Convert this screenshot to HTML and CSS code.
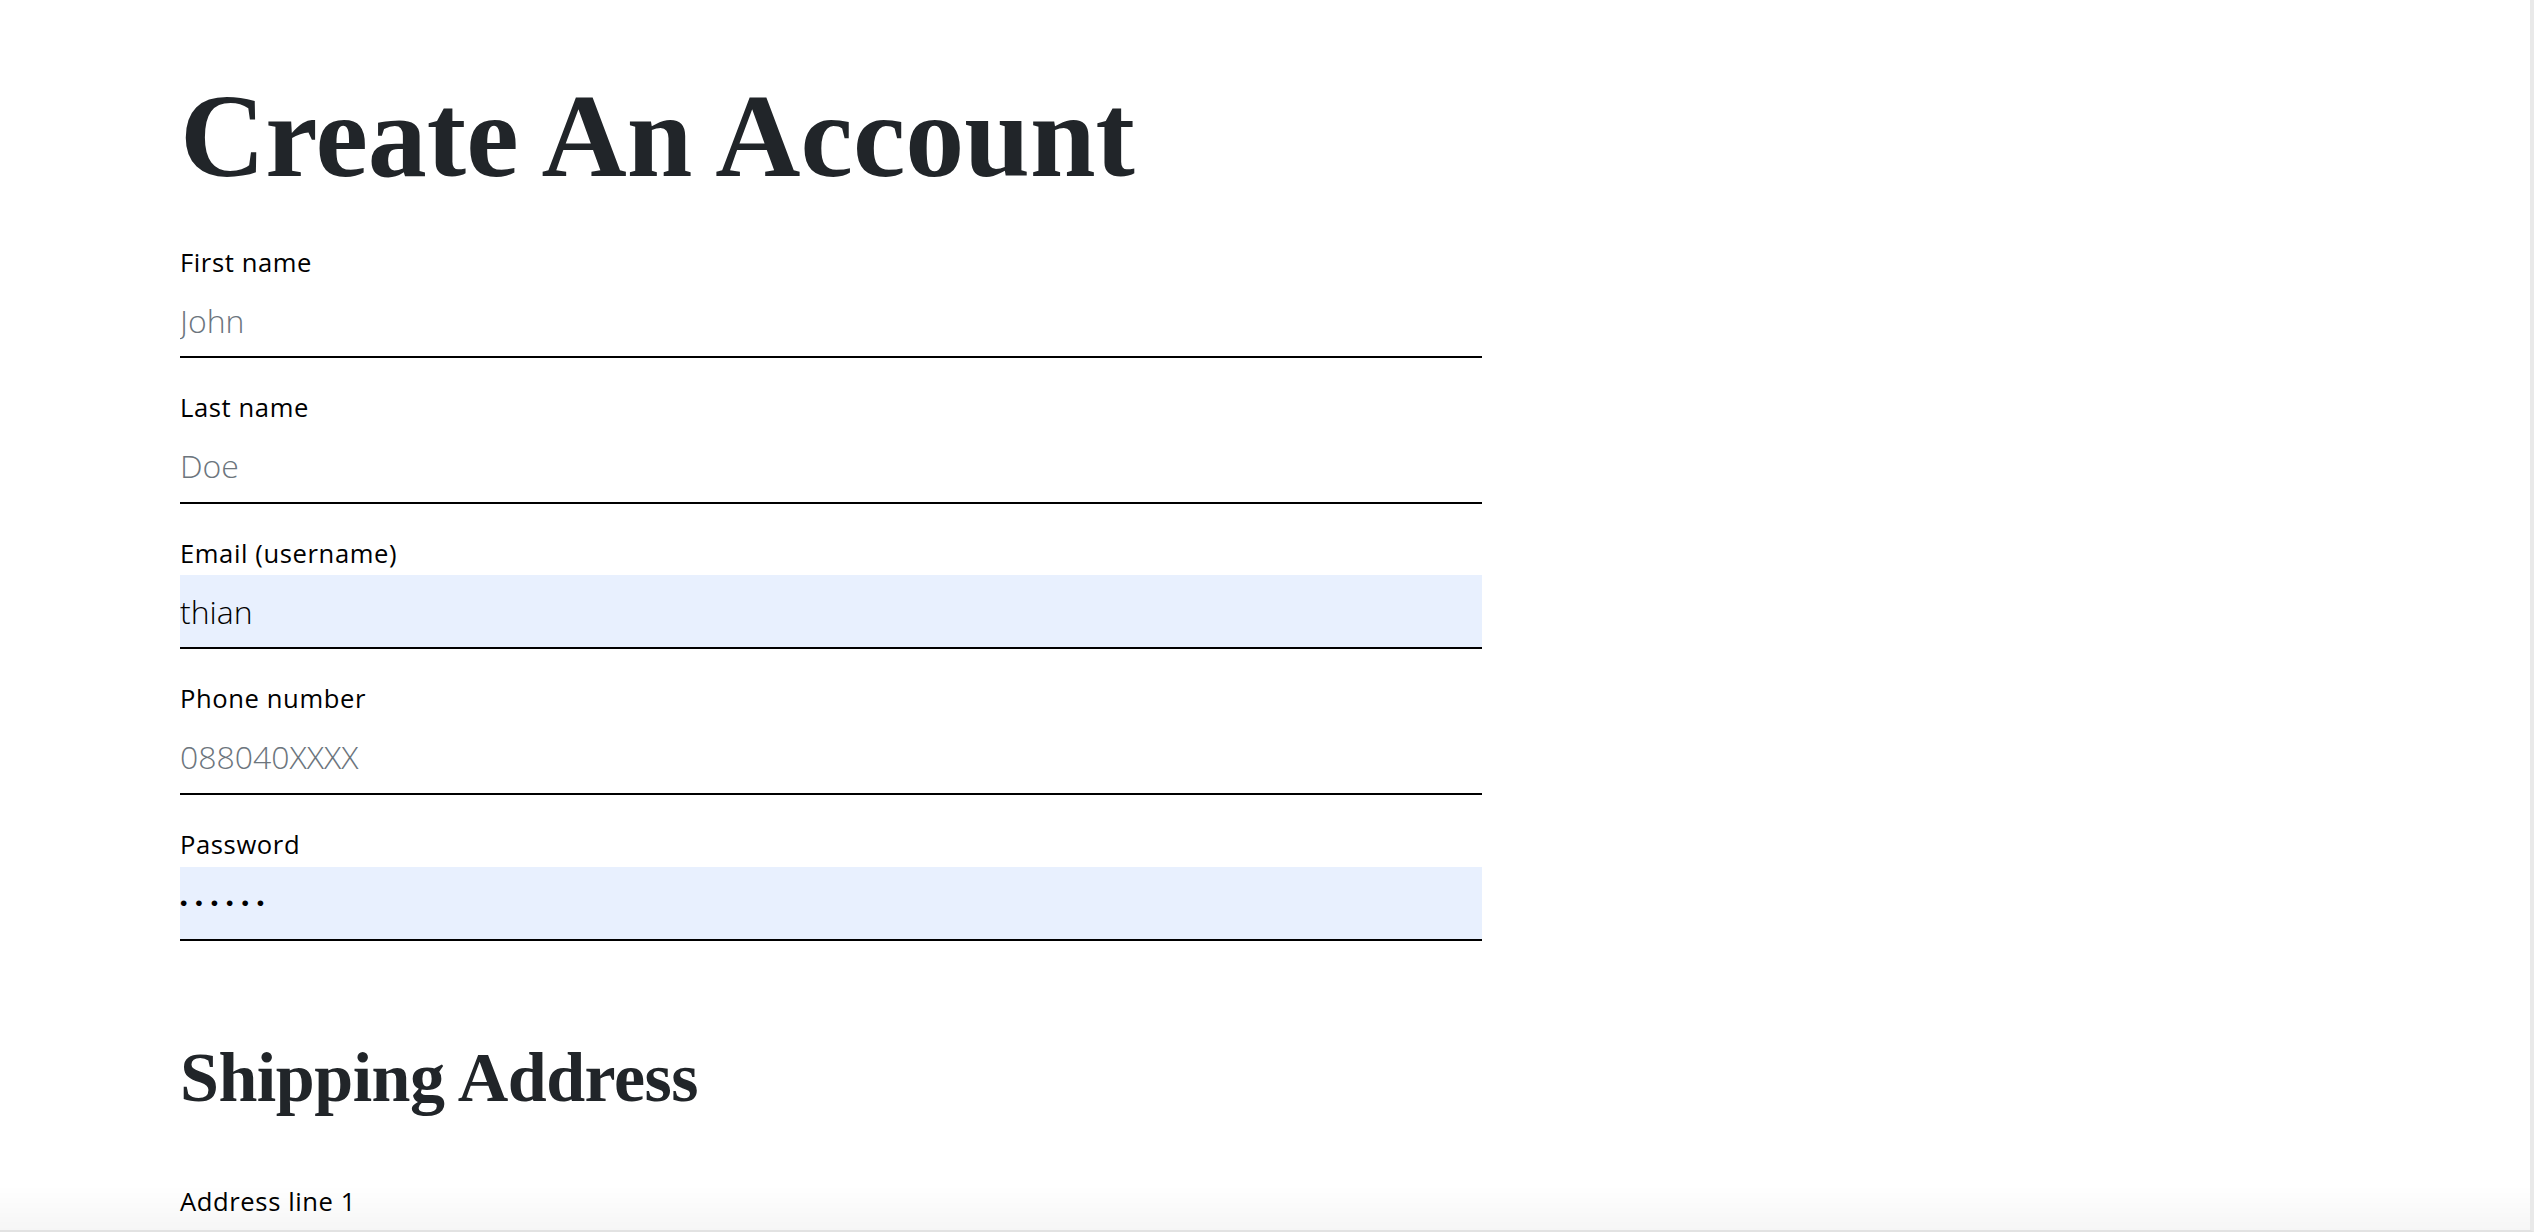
FILE: index.html
```html
<!DOCTYPE html>
<html lang="en">
<head>
<meta charset="utf-8">
<title>Create An Account</title>
<link rel="stylesheet" href="styles.css">
</head>
<body>
<main class="page">
  <form class="form" autocomplete="off">
    <h1 class="title">Create An Account</h1>
    <div class="field">
      <label class="label" for="first">First name</label>
      <input class="input" id="first" type="text" placeholder="John">
    </div>
    <div class="field">
      <label class="label" for="last">Last name</label>
      <input class="input" id="last" type="text" placeholder="Doe">
    </div>
    <div class="field">
      <label class="label" for="email">Email (username)</label>
      <input class="input input-filled" id="email" type="text" value="thian">
    </div>
    <div class="field">
      <label class="label" for="phone">Phone number</label>
      <input class="input" id="phone" type="text" placeholder="088040XXXX">
    </div>
    <div class="field">
      <label class="label" for="password">Password</label>
      <input class="input input-filled input-password" id="password" type="password" value="thian1">
    </div>
    <h2 class="subtitle">Shipping Address</h2>
    <div class="field">
      <label class="label" for="addr1">Address line 1</label>
      <input class="input" id="addr1" type="text">
    </div>
  </form>
</main>
<div class="frame-edge"></div>
</body>
</html>
```
FILE: styles.css
```css
html, body {
  margin: 0;
  padding: 0;
  background: #ffffff;
}

body {
  font-family: "Open Sans", "Noto Sans", sans-serif;
  color: #000;
}

.page {
  padding: 66px 0 0 180px;
}

.form {
  width: 1302px;
  display: flex;
  flex-direction: column;
}

.title {
  margin: 0 0 37px;
  font-family: "Liberation Serif", serif;
  font-weight: 700;
  font-size: 118px;
  line-height: 1.2;
  color: #212529;
}

.subtitle {
  margin: 63px 0 64px;
  font-family: "Liberation Serif", serif;
  font-weight: 700;
  font-size: 70px;
  line-height: 1.2;
  letter-spacing: -0.5px;
  color: #212529;
}

.field {
  display: flex;
  flex-direction: column;
  gap: 3.2px;
  margin-bottom: 32px;
}

.label {
  font-weight: 400;
  font-size: 25.6px;
  line-height: 36.4px;
  letter-spacing: 0.6px;
  color: #000;
}

.input {
  display: block;
  width: 100%;
  height: 74px;
  box-sizing: border-box;
  margin: 0;
  padding: 12px 0;
  border: 0;
  border-bottom: 2px solid #000;
  border-radius: 0;
  background: transparent;
  font-family: "Open Sans", "Noto Sans", sans-serif;
  font-weight: 300;
  font-size: 32px;
  line-height: 48px;
  color: #000;
  outline: none;
}

.input::placeholder {
  color: #6c757d;
  opacity: 1;
}

.input-filled {
  background: #e8f0fe;
}

.input-password {
  font-family: "DejaVu Sans", sans-serif;
  font-size: 21px;
  letter-spacing: 8px;
}

.frame-edge {
  position: fixed;
  inset: 0;
  pointer-events: none;
  border-right: 4px solid #e9e9e9;
  border-bottom: 2px solid #e2e2e2;
  background: linear-gradient(to bottom, rgba(0,0,0,0) 0, rgba(0,0,0,0) calc(100% - 45px), rgba(0,0,0,0.035) 100%);
}
```
